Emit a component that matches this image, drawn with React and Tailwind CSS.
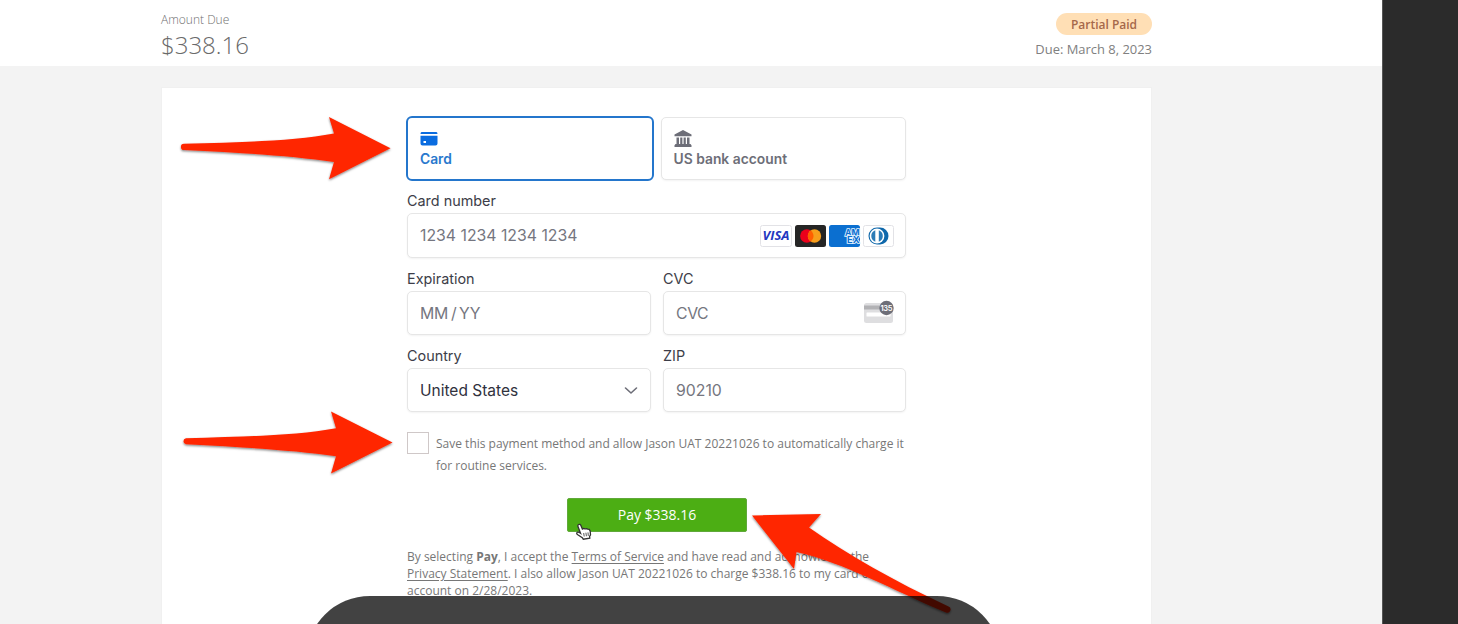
import React from 'react';

const sans = "font-['Open_Sans',sans-serif]";
const inter = "font-['Inter',sans-serif]";
const box = 'flex items-center rounded-[5px] border border-[#e6e6e6] bg-white px-[12px] text-[15.800px] leading-[20px] shadow-[0_1px_2px_rgba(0,0,0,0.05)]';

function Header() {
  return (
    <header className={`flex h-[66px] justify-between bg-white pr-[230px] pl-[161px] ${sans}`}>
      <div className="pt-[12px]">
        <div className="text-[12px] leading-[16px] font-light text-[#6f6f6f]">Amount Due</div>
        <div className="mt-[2px] text-[24px] leading-[30px] font-light text-[#6a6a6a]">$338.16</div>
      </div>
      <div className="flex flex-col items-end pt-[13px]">
        <div className="flex h-[22px] w-[96px] items-center justify-center rounded-full bg-[#ffdfb5] pt-[1px] text-[12px] font-semibold text-[#a5684a]">Partial Paid</div>
        <div className="mt-[5px] text-[12.950px] leading-[18px] text-[#808080]">Due: March 8, 2023</div>
      </div>
    </header>
  );
}

function Brands() {
  return (
    <div className="-mr-px ml-auto flex gap-[3px]">
      <svg width="32" height="22" viewBox="0 0 32 22">
        <rect x=".5" y=".5" width="31" height="21" rx="2" fill="#fff" stroke="#e2e2e6" />
        <text x="2.500" y="15" textLength="27" lengthAdjust="spacingAndGlyphs" fontFamily="Open Sans" fontWeight="700" fontStyle="italic" fontSize="11.500" fill="#2337c0">VISA</text>
      </svg>
      <svg width="31" height="22" viewBox="0 0 31 22">
        <rect width="31" height="22" rx="2.500" fill="#252525" />
        <circle cx="11.800" cy="11" r="6.700" fill="#eb001b" />
        <circle cx="19.500" cy="11" r="6.700" fill="#f79e1b" />
        <path d="M15.650 5.500a6.700 6.700 0 0 1 0 11a6.700 6.700 0 0 1 0-11z" fill="#ff5f00" />
      </svg>
      <svg width="32" height="22" viewBox="0 0 32 22">
        <rect width="31" height="22" rx="2.500" fill="#0b6fd0" />
        <g fill="#0b6fd0" stroke="#e4f3ff" strokeWidth="1.700" paintOrder="stroke" fontFamily="Inter" fontWeight="700" fontSize="8.500">
          <text x="16" y="10.500" textLength="14.500" lengthAdjust="spacingAndGlyphs">AM</text>
          <text x="18" y="18.300" textLength="12.500" lengthAdjust="spacingAndGlyphs">EX</text>
        </g>
      </svg>
      <svg className="-ml-px" width="31" height="22" viewBox="0 0 31 22">
        <rect x=".5" y=".5" width="30" height="21" rx="2" fill="#fff" stroke="#e2e2e6" />
        <path d="M14 2.500h3a8.500 8.500 0 0 1 0 17h-3a8.500 8.500 0 0 1 0-17z" fill="#0f68ab" />
        <circle cx="14" cy="11" r="7.400" fill="#fff" />
        <path d="M12.300 5.200v11.600a6.200 6.200 0 0 1 0-11.600zM15.800 5.200v11.600a6.200 6.200 0 0 0 0-11.600z" fill="#2a7ab6" />
      </svg>
    </div>
  );
}

function CvcIcon() {
  return (
    <svg className="-mr-[2px] mb-[3px] ml-auto" width="32" height="24" viewBox="0 0 32 24">
      <rect x="1" y="3" width="29" height="20" rx="2.500" fill="#dedee0" />
      <rect x="1" y="5.500" width="29" height="4" fill="#b2b2b5" />
      <rect x="3.500" y="12.500" width="24" height="4" rx=".5" fill="#fff" />
      <circle cx="23.500" cy="8" r="7.200" fill="#6d6e78" />
      <text x="23.300" y="10.700" textAnchor="middle" fontFamily="Inter" fontWeight="600" fontSize="7.500" letterSpacing="-.4" fill="#fff">135</text>
    </svg>
  );
}

function Field({ label, height = 'h-[44px]', children }) {
  return (
    <div className="min-w-0">
      <div className="mb-[2px] text-[14.400px] leading-[20px] text-[#3c3d48]">{label}</div>
      <div className={`${box} ${height}`}>{children}</div>
    </div>
  );
}

function PaymentForm() {
  return (
    <div className={`flex flex-col ${inter}`}>
      <div className="-ml-px flex h-[65px] gap-[7px]">
        <div className="w-[248px] rounded-[6px] border-2 border-[#2476cc] bg-white pt-[13px] pl-[12px] text-[#2878cd]">
          <svg width="18" height="14" viewBox="0 0 18 14" className="mt-[1px] mb-[5px]" fill="#0a6ce0">
            <path d="M1.700 0h14.600Q17.500 0 17.500 2H.5Q.5 0 1.700 0zM.5 3.800h17V11.500a2 2 0 0 1-2 2h-13a2 2 0 0 1-2-2zM3.500 9v2h2.500V9z" fillRule="evenodd" />
          </svg>
          <div className="text-[13.800px] leading-[16px] font-semibold">Card</div>
        </div>
        <div className="mt-px h-[63px] w-[245px] rounded-[5px] border border-[#e6e6e6] bg-white pt-[12px] pl-[11.500px] text-[#6d6e78] shadow-[0_1px_2px_rgba(0,0,0,0.05)]">
          <svg width="18" height="18" viewBox="0 0 18 18" className="mb-[3px]" fill="#6d6e78">
            <path d="M9 0l8.500 4.500V6.300H.5V4.500zM2.500 7.500H5V14H2.500zM6.200 7.500h2.200V14H6.200zM9.600 7.500h2.200V14H9.600zM13 7.500h2.500V14H13zM1.500 14h15l1 1.300V17H.5v-1.700z" />
          </svg>
          <div className="text-[13.850px] leading-[16px] font-semibold">US bank account</div>
        </div>
      </div>
      <div className="mt-[10px]">
        <Field label="Card number" height="h-[45px]">
          <span className="text-[#757680]">1234 1234 1234 1234</span>
          <Brands />
        </Field>
      </div>
      <div className="mt-[11px] grid grid-cols-[244px_243px] gap-x-[12px] gap-y-[11px]">
        <Field label="Expiration"><span className="mt-px tracking-[-0.2px] text-[#757680] [word-spacing:-1.500px]">MM / YY</span></Field>
        <Field label="CVC"><span className="mt-px tracking-[-0.400px] text-[#757680]">CVC</span><CvcIcon /></Field>
        <Field label="Country">
          <span className="mt-px text-[15.500px] text-[#30313d]">United States</span>
          <svg className="ml-auto" width="14" height="10" viewBox="0 0 14 10" fill="none" stroke="#6d6e78" strokeWidth="1.600" strokeLinecap="round" strokeLinejoin="round"><path d="M1.500 3L7 8 12.500 3" /></svg>
        </Field>
        <Field label="ZIP"><span className="mt-px text-[#757680]">90210</span></Field>
      </div>
    </div>
  );
}

function Consent() {
  return (
    <div className={`text-[#777] ${sans}`}>
      <div className="mt-[20px] flex">
        <span className="h-[22px] w-[22px] shrink-0 border border-[#cfc8c8] bg-white" />
        <p className="mt-px ml-[7px] text-[12px] leading-[22px] whitespace-nowrap">
          Save this payment method and allow Jason UAT 20221026 to automatically charge it<br />for routine services.
        </p>
      </div>
      <div className="ml-[160px] pt-[21px]">
        <button className="block h-[34px] w-[180px] rounded-[2px] border border-[#60a93a] bg-[#4cae14] text-[14px] leading-[32px] text-white">Pay $338.16</button>
      </div>
      <p className="mt-[16px] text-[12px] leading-[17.200px] whitespace-nowrap">
        By selecting <b>Pay</b>, I accept the <u className="underline-offset-2">Terms of Service</u> and have read and acknowledge the<br />
        <u className="underline-offset-2">Privacy Statement</u>. I also allow Jason UAT 20221026 to charge $338.16 to my card or<br />
        account on 2/28/2023.
      </p>
    </div>
  );
}

function Annotations() {
  return (
    <svg className="pointer-events-none absolute top-0 left-0" width="1458" height="624" viewBox="0 0 1458 624">
      <defs>
        <filter id="shade" x="-10%" y="-20%" width="120%" height="150%">
          <feDropShadow dx="0" dy="1.200" stdDeviation="1" floodOpacity=".5" />
        </filter>
      </defs>
      <g fill="#ff2600" filter="url(#shade)">
        <path d="M184 143.800C245 142 295 141 334 133.500L329 117 390.500 148.200 329 179.200 334 162C295 156 245 153 184 150A3.100 3.100 0 0 1 184 143.800z" />
        <path d="M186 438.200C247 436.400 297 435.400 336 428.200L331 411.400 392.500 442.600 331 473.500 336 456.300C297 450.400 247 447.400 186 444.300A3.100 3.100 0 0 1 186 438.200z" />
        <path d="M752 515.500L821 514 809 527.500C847 554 894 581 948.500 606.500A3.200 3.200 0 0 1 946 612.500C892 590 845 563 796.500 552L794 569z" />
      </g>
      <path d="M578.600 524.500q1.600-.7 2.300 1l1.500 3.600 1.300-.6 1.300.3 1.500-.2 1.200.6 1.600.2.900 1.800.3 3.600-.9 1.500.2 1.900-6.500 1-1-1.600-4.500-2.900q-2-1.600-.4-2.500 1.200-.4 3.100 1l-2.600-6.900q-.3-1.200.7-1.800z" fill="#fff" stroke="#333" strokeWidth="1.300" />
      <path d="M583.700 533l.5 3.500M585.900 532.700l.5 3.500M588 532.400l.3 3.500" stroke="#444" strokeWidth=".9" />
    </svg>
  );
}

export default function App() {
  return (
    <div className="relative flex h-[624px] w-[1458px] overflow-hidden bg-[#f3f3f3]">
      <div className="w-[1382px] shrink-0">
        <Header />
        <main className="mt-[21px] ml-[161px] h-[560px] w-[991px] border border-[#f0f0f0] bg-white pt-[28px] pl-[245px]">
          <div className="w-[499px]">
            <PaymentForm />
            <Consent />
          </div>
        </main>
      </div>
      <aside className="flex-1 border-l border-[#555] bg-[#2b2b2b]" />
      <Annotations />
      <div className="absolute top-[596px] left-[306px] h-[130px] w-[695px] rounded-[64px] bg-black/74" />
    </div>
  );
}
